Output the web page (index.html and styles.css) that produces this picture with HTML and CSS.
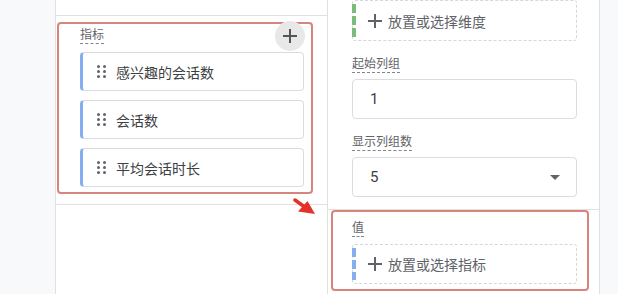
FILE: index.html
```html
<!DOCTYPE html>
<html lang="zh-CN">
<head>
    <meta charset="UTF-8">
    <meta name="viewport" content="width=device-width, initial-scale=1.0">
    <title>数据透视表 - 设置</title>
    <link rel="stylesheet" href="styles.css">
</head>
<body>
    <div class="page">
        <div class="gutter"></div>

        <div class="panel left-panel">
            <div class="panel-top"></div>
            <div class="section metrics-section">
                <div class="highlight metrics-box">
                    <div class="box-header">
                        <span class="field-label">指标</span>
                        <button class="round-add" title="添加指标">
                            <svg width="16" height="16" viewBox="0 0 16 16"><path d="M8 1v14M1 8h14" stroke="#555" stroke-width="2"/></svg>
                        </button>
                    </div>
                    <div class="chip-list">
                        <div class="chip"><span class="handle"><i></i><i></i><i></i><i></i><i></i><i></i></span>感兴趣的会话数</div>
                        <div class="chip"><span class="handle"><i></i><i></i><i></i><i></i><i></i><i></i></span>会话数</div>
                        <div class="chip"><span class="handle"><i></i><i></i><i></i><i></i><i></i><i></i></span>平均会话时长</div>
                    </div>
                </div>
            </div>
        </div>

        <div class="panel right-panel">
            <div class="section columns-section">
                <div class="drop-zone">
                    <span class="drop-bar green"></span>
                    <svg class="drop-plus" width="14" height="14" viewBox="0 0 14 14"><path d="M7 0v14M0 7h14" stroke="#5f6368" stroke-width="2"/></svg>
                    <span class="drop-text">放置或选择维度</span>
                </div>

                <div class="form-group">
                    <span class="field-label">起始列组</span>
                    <div class="input-box">1</div>
                </div>

                <div class="form-group">
                    <span class="field-label">显示列组数</span>
                    <div class="input-box select-box">
                        <span>5</span>
                        <span class="caret"></span>
                    </div>
                </div>
            </div>

            <div class="highlight values-box">
                <span class="field-label">值</span>
                <div class="drop-zone">
                    <span class="drop-bar blue"></span>
                    <svg class="drop-plus" width="14" height="14" viewBox="0 0 14 14"><path d="M7 0v14M0 7h14" stroke="#5f6368" stroke-width="2"/></svg>
                    <span class="drop-text">放置或选择指标</span>
                </div>
            </div>
        </div>

        <div class="gutter right-gutter"></div>

        <!-- annotation arrow -->
        <svg class="arrow" width="26" height="20" viewBox="0 0 26 20">
            <path d="M2 2 L11 8.5" stroke="#e53228" stroke-width="3.5" stroke-linecap="round"/>
            <path d="M22 16 L5 13.5 L14.5 3 Z" fill="#e53228"/>
        </svg>
    </div>
</body>
</html>
```

FILE: styles.css
```css
* {
    box-sizing: border-box;
}
body {
    margin: 0;
    font-family: Roboto, "Noto Sans CJK SC", sans-serif;
    background: #fff;
    color: #3c4043;
}
.page {
    position: relative;
    display: flex;
    width: 618px;
    height: 294px;
    overflow: hidden;
}
.gutter {
    width: 56px;
    flex-shrink: 0;
    background: #f8f9fa;
    border-right: 1px solid #e0e0e0;
}
.right-gutter {
    width: 18px;
    border-right: none;
}
.panel {
    width: 272px;
    flex-shrink: 0;
    background: #fff;
    border-right: 1px solid #e0e0e0;
}
.panel-top {
    height: 16px;
    border-bottom: 1px solid #e0e0e0;
}
.section {
    border-bottom: 1px solid #e0e0e0;
}
.metrics-section {
    padding: 6px 14px 10px 1px;
}
.highlight {
    border: 2px solid #d8847d;
    border-radius: 4px;
}
.metrics-box {
    padding: 0 7px 5px 21px;
}
.box-header {
    display: flex;
    justify-content: space-between;
    align-items: flex-start;
    height: 28px;
}
.field-label {
    display: block;
    font-size: 12px;
    line-height: 16px;
    color: #5f6368;
    border-bottom: 1px dashed #80868b;
}
.box-header .field-label {
    margin-top: 3px;
}
.round-add {
    width: 30px;
    height: 30px;
    margin: -3px -1px 0 0;
    padding: 0;
    border: none;
    border-radius: 50%;
    background: #e8e8e8;
    display: flex;
    align-items: center;
    justify-content: center;
}
.chip-list {
    display: flex;
    flex-direction: column;
    gap: 9px;
}
.chip {
    display: flex;
    align-items: center;
    height: 39px;
    padding-left: 14px;
    border: 1px solid #dadce0;
    border-left: 3px solid #85aef0;
    border-radius: 4px;
    font-size: 14px;
    color: #3c4043;
}
.handle {
    display: grid;
    grid-template-columns: 3px 3px;
    gap: 2px 3px;
    margin-right: 10px;
}
.handle i {
    width: 3px;
    height: 3px;
    border-radius: 50%;
    background: #5f6368;
}
.columns-section {
    padding: 0 22px 12px 24px;
}
.drop-zone {
    display: flex;
    align-items: center;
    height: 41px;
    border: 1px dashed #d5d7da;
    border-radius: 3px;
}
.drop-bar {
    align-self: stretch;
    width: 4px;
    margin: 3px 12px 3px -1px;
}
.drop-bar.green {
    background: repeating-linear-gradient(#7dbb7a 0 9px, transparent 9px 12px);
}
.drop-bar.blue {
    background: repeating-linear-gradient(#85aef0 0 9px, transparent 9px 12px);
}
.drop-plus {
    margin-right: 6px;
}
.drop-text {
    font-size: 14px;
    color: #5f6368;
}
.form-group {
    display: flex;
    flex-direction: column;
    align-items: flex-start;
    margin-top: 15px;
}
.input-box {
    align-self: stretch;
    display: flex;
    align-items: center;
    justify-content: space-between;
    height: 40px;
    margin-top: 6px;
    padding: 0 16px 0 17px;
    border: 1px solid #dadce0;
    border-radius: 4px;
    font-size: 15px;
    color: #3c4043;
}
.caret {
    width: 0;
    height: 0;
    border-left: 5px solid transparent;
    border-right: 5px solid transparent;
    border-top: 5px solid #5f6368;
}
.values-box {
    display: flex;
    flex-direction: column;
    align-items: flex-start;
    width: 258px;
    margin-left: 3px;
    padding: 8px 10px 5px 19px;
}
.values-box .drop-zone {
    align-self: stretch;
    margin-top: 7px;
    height: 40px;
}
.arrow {
    position: absolute;
    left: 293px;
    top: 198px;
}
```
